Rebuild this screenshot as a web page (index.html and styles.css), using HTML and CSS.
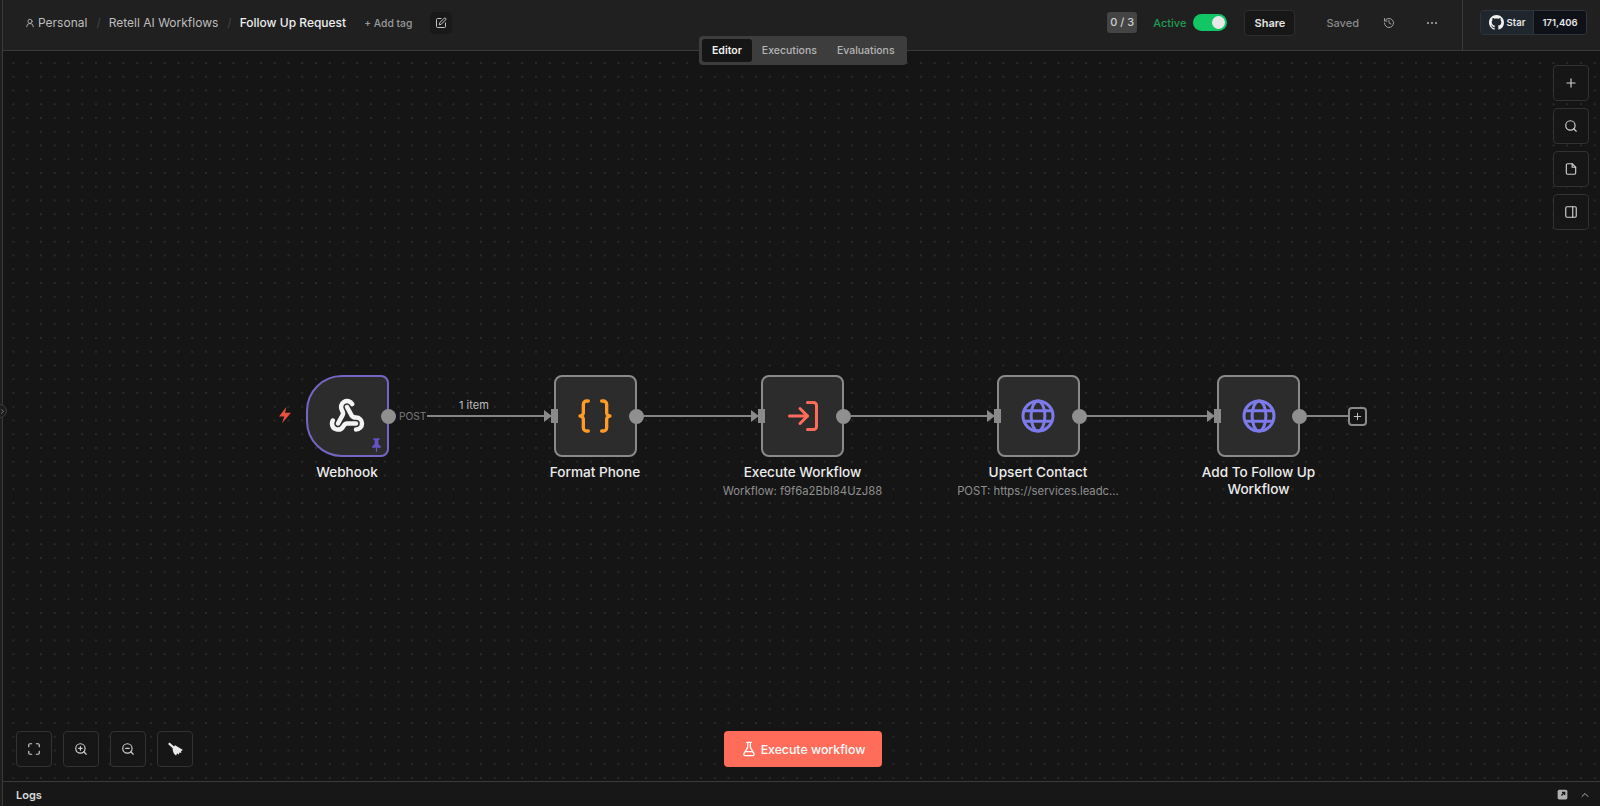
FILE: index.html
```html
<!DOCTYPE html>
<html lang="en">
<head>
    <meta charset="UTF-8">
    <title>Follow Up Request - n8n</title>
    <link rel="stylesheet" href="styles.css">
</head>
<body>
    <div class="app">
        <div class="side">
            <span class="side-toggle"><svg viewBox="0 0 24 24" class="ico side-chevron"><path d="m9 6 6 6-6 6"/></svg></span>
        </div>
        <div class="main">
            <header class="topbar">
                <div class="crumbs">
                    <svg viewBox="0 0 24 24" class="ico user-ico"><circle cx="12" cy="8" r="5"/><path d="M20 21a8 8 0 0 0-16 0"/></svg>
                    <span class="crumb first">Personal</span>
                    <span class="sep">/</span>
                    <span class="crumb">Retell AI Workflows</span>
                    <span class="sep">/</span>
                    <span class="crumb current">Follow Up Request</span>
                    <span class="add-tag">+ Add tag</span>
                    <span class="tag-btn"><svg viewBox="0 0 24 24" class="ico"><path d="M12 3H5a2 2 0 0 0-2 2v14a2 2 0 0 0 2 2h14a2 2 0 0 0 2-2v-7"/><path d="M18.400 2.600a1 1 0 0 1 3 3l-9 9-3.900 1 1-3.900z"/></svg></span>
                </div>
                <div class="actions">
                    <span class="counter">0 / 3</span>
                    <span class="active-label">Active</span>
                    <span class="toggle"><span class="knob"></span></span>
                    <span class="share">Share</span>
                    <span class="saved">Saved</span>
                    <svg viewBox="0 0 24 24" class="ico history"><path d="M3 12a9 9 0 1 0 9-9 9.75 9.75 0 0 0-6.74 2.74L3 8"/><path d="M3 3v5h5"/><path d="M12 7v5l4 2"/></svg>
                    <span class="more"><i></i><i></i><i></i></span>
                </div>
                <div class="star-box">
                    <div class="gh">
                        <span class="gh-star">
                            <svg viewBox="0 0 16 16" class="gh-logo"><path d="M8 0C3.58 0 0 3.58 0 8c0 3.54 2.29 6.53 5.47 7.59.4.07.55-.17.55-.38 0-.19-.01-.82-.01-1.49-2.01.37-2.53-.49-2.69-.94-.09-.23-.48-.94-.82-1.13-.28-.15-.68-.52-.01-.53.63-.01 1.08.58 1.23.82.72 1.21 1.87.87 2.33.66.07-.52.28-.87.51-1.07-1.78-.2-3.64-.89-3.64-3.95 0-.87.31-1.59.82-2.15-.08-.2-.36-1.02.08-2.12 0 0 .67-.21 2.2.82.64-.18 1.32-.27 2-.27.68 0 1.36.09 2 .27 1.53-1.04 2.2-.82 2.2-.82.44 1.1.16 1.92.08 2.12.51.56.82 1.27.82 2.15 0 3.07-1.87 3.75-3.65 3.95.29.25.54.73.54 1.48 0 1.07-.01 1.93-.01 2.2 0 .21.15.46.55.38A8.013 8.013 0 0016 8c0-4.42-3.58-8-8-8z"/></svg>
                            Star
                        </span>
                        <span class="gh-count">171,406</span>
                    </div>
                </div>
            </header>

            <div class="tabs">
                <span class="tab selected">Editor</span>
                <span class="tab">Executions</span>
                <span class="tab">Evaluations</span>
            </div>

            <section class="canvas">
                <!-- edges -->
                <svg class="edges" viewBox="0 0 1597 730">
                    <path d="M423 365H546"/>
                    <path d="M641 365H753"/>
                    <path d="M848 365H988"/>
                    <path d="M1083 365H1208"/>
                    <path d="M1304 365H1345"/>
                </svg>

                <span class="bolt"><svg viewBox="0 0 24 24"><path d="M14 1 4 14h7l-3 9 12-14h-8z"/></svg></span>
                <span class="edge-post">POST</span>
                <span class="edge-items">1 item</span>

                <!-- nodes -->
                <div class="node n-webhook">
                    <div class="box trigger">
                        <svg viewBox="0 0 24 24" class="node-ico webhook"><path d="M18 16.98h-5.99c-1.1 0-1.95.94-2.48 1.9A4 4 0 0 1 2 17c.01-.7.2-1.4.57-2"/><path d="m6 17 3.13-5.78c.53-.97.1-2.18-.5-3.1a4 4 0 1 1 6.89-4.06"/><path d="m12 6 3.13 5.73C15.66 12.7 16.9 13 18 13a4 4 0 0 1 0 8"/></svg>
                        <svg viewBox="0 0 24 24" class="pin"><path d="M7 2h10v2l-2 1v6l4 4v2h-6v6l-1 1-1-1v-6H5v-2l4-4V5L7 4z"/></svg>
                        <span class="out"></span>
                    </div>
                    <div class="label">Webhook</div>
                </div>

                <div class="node n-format">
                    <div class="box">
                        <span class="in"></span>
                        <svg viewBox="0 0 24 24" class="node-ico braces"><path d="M8 3H7a2 2 0 0 0-2 2v5a2 2 0 0 1-2 2 2 2 0 0 1 2 2v5c0 1.1.9 2 2 2h1"/><path d="M16 21h1a2 2 0 0 0 2-2v-5c0-1.1.9-2 2-2a2 2 0 0 1-2-2V5a2 2 0 0 0-2-2h-1"/></svg>
                        <span class="out"></span>
                    </div>
                    <div class="label">Format Phone</div>
                </div>

                <div class="node n-execute">
                    <div class="box">
                        <span class="in"></span>
                        <svg viewBox="0 0 24 24" class="node-ico login"><path d="M15 3h4a2 2 0 0 1 2 2v14a2 2 0 0 1-2 2h-4"/><path d="m10 17 5-5-5-5"/><path d="M15 12H3"/></svg>
                        <span class="out"></span>
                    </div>
                    <div class="label">Execute Workflow</div>
                    <div class="sub">Workflow: f9f6a2BbI84UzJ88</div>
                </div>

                <div class="node n-upsert">
                    <div class="box">
                        <span class="in"></span>
                        <svg viewBox="0 0 24 24" class="node-ico globe"><circle cx="12" cy="12" r="10"/><ellipse cx="12" cy="12" rx="4.6" ry="10"/><path d="M3.2 8.5h17.6M3.2 15.5h17.6"/></svg>
                        <span class="out"></span>
                    </div>
                    <div class="label">Upsert Contact</div>
                    <div class="sub">POST: https://services.leadc...</div>
                </div>

                <div class="node n-follow">
                    <div class="box">
                        <span class="in"></span>
                        <svg viewBox="0 0 24 24" class="node-ico globe"><circle cx="12" cy="12" r="10"/><ellipse cx="12" cy="12" rx="4.6" ry="10"/><path d="M3.2 8.5h17.6M3.2 15.5h17.6"/></svg>
                        <span class="out"></span>
                    </div>
                    <div class="label">Add To Follow Up Workflow</div>
                </div>

                <span class="add-node"><svg viewBox="0 0 24 24" class="ico"><path d="M12 5v14M5 12h14"/></svg></span>

                <!-- canvas controls -->
                <div class="right-tools">
                    <span class="tool"><svg viewBox="0 0 24 24" class="ico"><path d="M12 5v14M5 12h14"/></svg></span>
                    <span class="tool"><svg viewBox="0 0 24 24" class="ico"><circle cx="11" cy="11" r="8"/><path d="m21 21-4.3-4.3"/></svg></span>
                    <span class="tool"><svg viewBox="0 0 24 24" class="ico"><path d="M14 3H6a2 2 0 0 0-2 2v14a2 2 0 0 0 2 2h12a2 2 0 0 0 2-2V9z"/><path d="M14 3v6h6"/></svg></span>
                    <span class="tool"><svg viewBox="0 0 24 24" class="ico"><rect x="3" y="3" width="18" height="18" rx="2"/><path d="M15 3v18"/></svg></span>
                </div>

                <div class="left-tools">
                    <span class="tool"><svg viewBox="0 0 24 24" class="ico"><path d="M8 3H5a2 2 0 0 0-2 2v3M21 8V5a2 2 0 0 0-2-2h-3M3 16v3a2 2 0 0 0 2 2h3M16 21h3a2 2 0 0 0 2-2v-3"/></svg></span>
                    <span class="tool"><svg viewBox="0 0 24 24" class="ico"><circle cx="11" cy="11" r="8"/><path d="m21 21-4.3-4.3M11 8v6M8 11h6"/></svg></span>
                    <span class="tool"><svg viewBox="0 0 24 24" class="ico"><circle cx="11" cy="11" r="8"/><path d="m21 21-4.3-4.3M8 11h6"/></svg></span>
                    <span class="tool"><svg viewBox="0 0 24 24" class="broom"><path d="M2.500 5 4.500 3l6 5.500-2 2z"/><path d="m8.500 9.500 3-3 10 6c-1.500.5-2 1-2.500 2l.5 2-2.500-.8-.8 3-2-2-1.500 2.800C10 18.500 8 14 8.500 9.500z"/></svg></span>
                </div>

                <button class="run-btn"><svg viewBox="0 0 24 24" class="ico flask"><path d="M10 2v7.500L4.500 19a2 2 0 0 0 1.700 3h11.600a2 2 0 0 0 1.700-3L14 9.500V2"/><path d="M8.500 2h7"/><path d="M7 16h10"/></svg>Execute workflow</button>
            </section>

            <footer class="logs">
                <span class="logs-title">Logs</span>
                <div class="logs-icons">
                    <svg viewBox="0 0 24 24" class="logs-pop"><rect x="3" y="3" width="18" height="18" rx="3"/><path d="m10 14 6-6M11 8h5v5" class="logs-arrow"/></svg>
                    <svg viewBox="0 0 24 24" class="ico logs-chevron"><path d="m6 15 6-6 6 6"/></svg>
                </div>
            </footer>
        </div>
    </div>
</body>
</html>
```

FILE: styles.css
```css
* {
    box-sizing: border-box;
    margin: 0;
    padding: 0;
}
html, body {
    height: 100%;
    overflow: hidden;
}
body {
    font-family: Inter, 'Liberation Sans', Arial, sans-serif;
    background-color: #151515;
    color: #d6d6d6;
}
.app {
    display: flex;
    height: 806px;
}
.ico {
    fill: none;
    stroke: currentColor;
    stroke-width: 2;
    stroke-linecap: round;
    stroke-linejoin: round;
    width: 14px;
    height: 14px;
    display: block;
}

/* collapsed sidebar */
.side {
    width: 3px;
    flex: none;
    background-color: #1e1e1e;
    border-right: 1px solid #3a3a3a;
    position: relative;
}
.side-toggle {
    position: absolute;
    left: -7px;
    top: 404px;
    width: 14px;
    height: 14px;
    border-radius: 50%;
    background-color: #1e1e1e;
    border: 1px solid #3a3a3a;
    display: flex;
    align-items: center;
    justify-content: flex-end;
    z-index: 2;
}
.side-chevron {
    width: 7px;
    height: 7px;
    color: #bbb;
}
.main {
    flex: 1;
    display: flex;
    flex-direction: column;
    position: relative;
    min-width: 0;
}

/* top bar */
.topbar {
    height: 51px;
    flex: none;
    background-color: #202020;
    border-bottom: 1px solid #3a3a3a;
    display: flex;
    align-items: center;
}
.crumbs {
    display: flex;
    align-items: center;
    padding-left: 22px;
    padding-bottom: 5px;
    flex: 1;
    font-size: 12px;
}
.user-ico {
    width: 10px;
    height: 10px;
    margin-right: 3px;
    color: #bdbdbd;
}
.crumb {
    color: #bdbdbd;
}
.crumb.current {
    color: #efefef;
    font-weight: 500;
}
.sep {
    color: #444;
    margin: 0 8px 0 9px;
}
.add-tag {
    margin-left: 18px;
    font-size: 10.3px;
    font-weight: 500;
    color: #9a9a9a;
}
.tag-btn {
    margin-left: 18px;
    width: 22px;
    height: 22px;
    border-radius: 4px;
    background-color: #191919;
    color: #c4c4c4;
    display: flex;
    align-items: center;
    justify-content: center;
}
.tag-btn .ico {
    width: 12px;
    height: 12px;
}
.actions {
    display: flex;
    align-items: center;
    height: 100%;
    padding-bottom: 5px;
}
.counter {
    width: 30px;
    height: 21px;
    line-height: 21px;
    text-align: center;
    font-size: 11px;
    font-weight: 500;
    border-radius: 3px;
    background-color: #444;
    color: #d0d0d0;
}
.active-label {
    margin-left: 16px;
    font-size: 11px;
    font-weight: 500;
    color: #1f9d55;
}
.toggle {
    margin-left: 7px;
    width: 34px;
    height: 17px;
    border-radius: 9px;
    background-color: #12c565;
    display: flex;
    justify-content: flex-end;
    align-items: center;
    padding-right: 2px;
}
.knob {
    width: 13px;
    height: 13px;
    border-radius: 50%;
    background-color: #e8e8e8;
}
.share {
    margin-left: 17px;
    width: 51px;
    height: 26px;
    line-height: 24px;
    text-align: center;
    font-size: 11px;
    font-weight: 600;
    color: #e6e6e6;
    background-color: #171717;
    border: 1px solid #2e2e2e;
    border-radius: 4px;
}
.saved {
    margin-left: 31px;
    font-size: 11px;
    font-weight: 500;
    color: #8c8c8c;
}
.history {
    margin-left: 24px;
    width: 12px;
    height: 12px;
    color: #a0a0a0;
}
.more {
    margin-left: 32px;
    width: 35px;
    display: flex;
    gap: 2px;
}
.more i {
    width: 2px;
    height: 2px;
    border-radius: 50%;
    background-color: #b0b0b0;
}
.star-box {
    height: 100%;
    width: 138px;
    border-left: 1px solid #3a3a3a;
    padding-left: 17px;
    padding-bottom: 6px;
    display: flex;
    align-items: center;
}
.gh {
    display: flex;
    width: 107px;
    height: 25px;
    border: 1px solid #2f343b;
    border-radius: 4px;
    overflow: hidden;
    font-size: 9.5px;
    font-weight: 600;
    color: #e6e6e6;
}
.gh-star {
    width: 53px;
    background-color: #20262d;
    border-right: 1px solid #2f343b;
    display: flex;
    align-items: center;
    justify-content: center;
    gap: 3px;
}
.gh-logo {
    width: 15px;
    height: 15px;
    fill: #f0f0f0;
}
.gh-count {
    flex: 1;
    background-color: #0e1117;
    display: flex;
    align-items: center;
    justify-content: center;
}

/* editor tabs */
.tabs {
    position: absolute;
    left: 696px;
    top: 36px;
    width: 208px;
    height: 29px;
    z-index: 3;
    display: flex;
    align-items: center;
    padding: 3px;
    background-color: #3d3d3d;
    border-radius: 4px;
    font-size: 10.5px;
    font-weight: 500;
    color: #b5b5b5;
}
.tab {
    padding: 0 10px;
    height: 23px;
    line-height: 24px;
    border-radius: 3px;
}
.tab.selected {
    background-color: #151515;
    color: #f0f0f0;
    font-weight: 600;
}

/* canvas */
.canvas {
    flex: 1;
    position: relative;
    background-color: #151515;
    background-image: radial-gradient(circle, #2a2a2a 0.9px, transparent 1.1px);
    background-size: 13.75px 13.75px;
    background-position: 3.6px 5.1px;
    overflow: hidden;
}
.edges {
    position: absolute;
    left: 0;
    top: 0;
    width: 1597px;
    height: 730px;
}
.edges path {
    stroke: #858585;
    stroke-width: 2;
    fill: none;
}
.bolt {
    position: absolute;
    left: 273px;
    top: 355px;
    width: 18px;
    height: 18px;
}
.bolt svg {
    display: block;
    fill: #e5503f;
}
.edge-post {
    position: absolute;
    left: 395px;
    top: 358px;
    font-size: 10.2px;
    line-height: 14px;
    color: #7a7a7a;
    background-color: #151515;
    padding: 0 1px;
}
.edge-items {
    position: absolute;
    left: 456px;
    top: 347px;
    font-size: 11px;
    line-height: 14px;
    color: #bdbdbd;
}
.node {
    position: absolute;
    top: 324px;
    width: 180px;
    display: flex;
    flex-direction: column;
    align-items: center;
}
.n-webhook { left: 254px; }
.n-format { left: 502px; }
.n-execute { left: 709.5px; }
.n-upsert { left: 945px; }
.n-follow { left: 1165.5px; }
.box {
    position: relative;
    width: 83px;
    height: 82px;
    background-color: #2c2c2c;
    border: 2px solid #8a8a8a;
    border-radius: 8px;
    display: flex;
    align-items: center;
    justify-content: center;
}
.box.trigger {
    border-color: #7467c4;
    border-radius: 36px 8px 8px 36px;
}
.node-ico {
    fill: none;
    stroke-linecap: round;
    stroke-linejoin: round;
    stroke-width: 2;
    width: 36px;
    height: 36px;
}
.webhook {
    stroke: #f4f4f4;
    stroke-width: 3;
}
.braces {
    stroke: #ff9b26;
    stroke-width: 2;
    width: 40px;
    height: 40px;
}
.login {
    stroke: #ff6d5a;
}
.globe {
    stroke: #7d7bea;
}
.pin {
    position: absolute;
    right: 3px;
    bottom: 3px;
    width: 15px;
    height: 15px;
    fill: #6352c9;
}
.out {
    position: absolute;
    right: -9px;
    top: 31.5px;
    width: 15px;
    height: 15px;
    border-radius: 50%;
    background-color: #8f8f8f;
}
.in {
    position: absolute;
    left: -5px;
    top: 32px;
    width: 7px;
    height: 14px;
    background-color: #8a8a8a;
}
.in::before {
    content: "";
    position: absolute;
    left: -7px;
    top: 1px;
    border-left: 8px solid #8a8a8a;
    border-top: 6px solid transparent;
    border-bottom: 6px solid transparent;
}
.label {
    margin-top: 7px;
    width: 150px;
    font-size: 13.6px;
    font-weight: 500;
    line-height: 17px;
    text-align: center;
    color: #ececec;
}
.sub {
    margin-top: 3px;
    font-size: 11.3px;
    line-height: 15px;
    color: #8f8f8f;
    white-space: nowrap;
}
.add-node {
    position: absolute;
    left: 1345px;
    top: 356px;
    width: 19px;
    height: 19px;
    border: 2px solid #8a8a8a;
    border-radius: 4px;
    background-color: #151515;
    color: #cfcfcf;
    display: flex;
    align-items: center;
    justify-content: center;
}
.add-node .ico {
    width: 11px;
    height: 11px;
}
.right-tools {
    position: absolute;
    left: 1550px;
    top: 14px;
    display: flex;
    flex-direction: column;
    gap: 7px;
}
.left-tools {
    position: absolute;
    left: 13px;
    top: 680px;
    display: flex;
    gap: 11px;
}
.tool {
    width: 36px;
    height: 36px;
    background-color: #161616;
    border: 1px solid #323232;
    border-radius: 4px;
    color: #cfcfcf;
    display: flex;
    align-items: center;
    justify-content: center;
}
.broom {
    width: 19px;
    height: 19px;
    fill: #e8e8e8;
}
.run-btn {
    position: absolute;
    left: 721px;
    top: 680px;
    width: 158px;
    height: 36px;
    border: none;
    border-radius: 4px;
    background-color: #ff6d5a;
    color: #fff;
    font-family: inherit;
    font-size: 12.3px;
    font-weight: 500;
    display: flex;
    align-items: center;
    justify-content: center;
    gap: 4px;
}
.flask {
    width: 16px;
    height: 16px;
}

/* logs panel */
.logs {
    height: 25px;
    flex: none;
    background-color: #171717;
    border-top: 1px solid #3a3a3a;
    display: flex;
    align-items: center;
    justify-content: space-between;
    padding: 1px 9px 0 13px;
}
.logs-title {
    font-size: 11px;
    font-weight: 600;
    color: #d8d8d8;
}
.logs-icons {
    display: flex;
    align-items: center;
    gap: 10px;
}
.logs-pop {
    width: 13px;
    height: 13px;
    fill: #b0b0b0;
}
.logs-arrow {
    fill: none;
    stroke: #171717;
    stroke-width: 2.5;
}
.logs-chevron {
    width: 12px;
    height: 12px;
    color: #b0b0b0;
}
```
